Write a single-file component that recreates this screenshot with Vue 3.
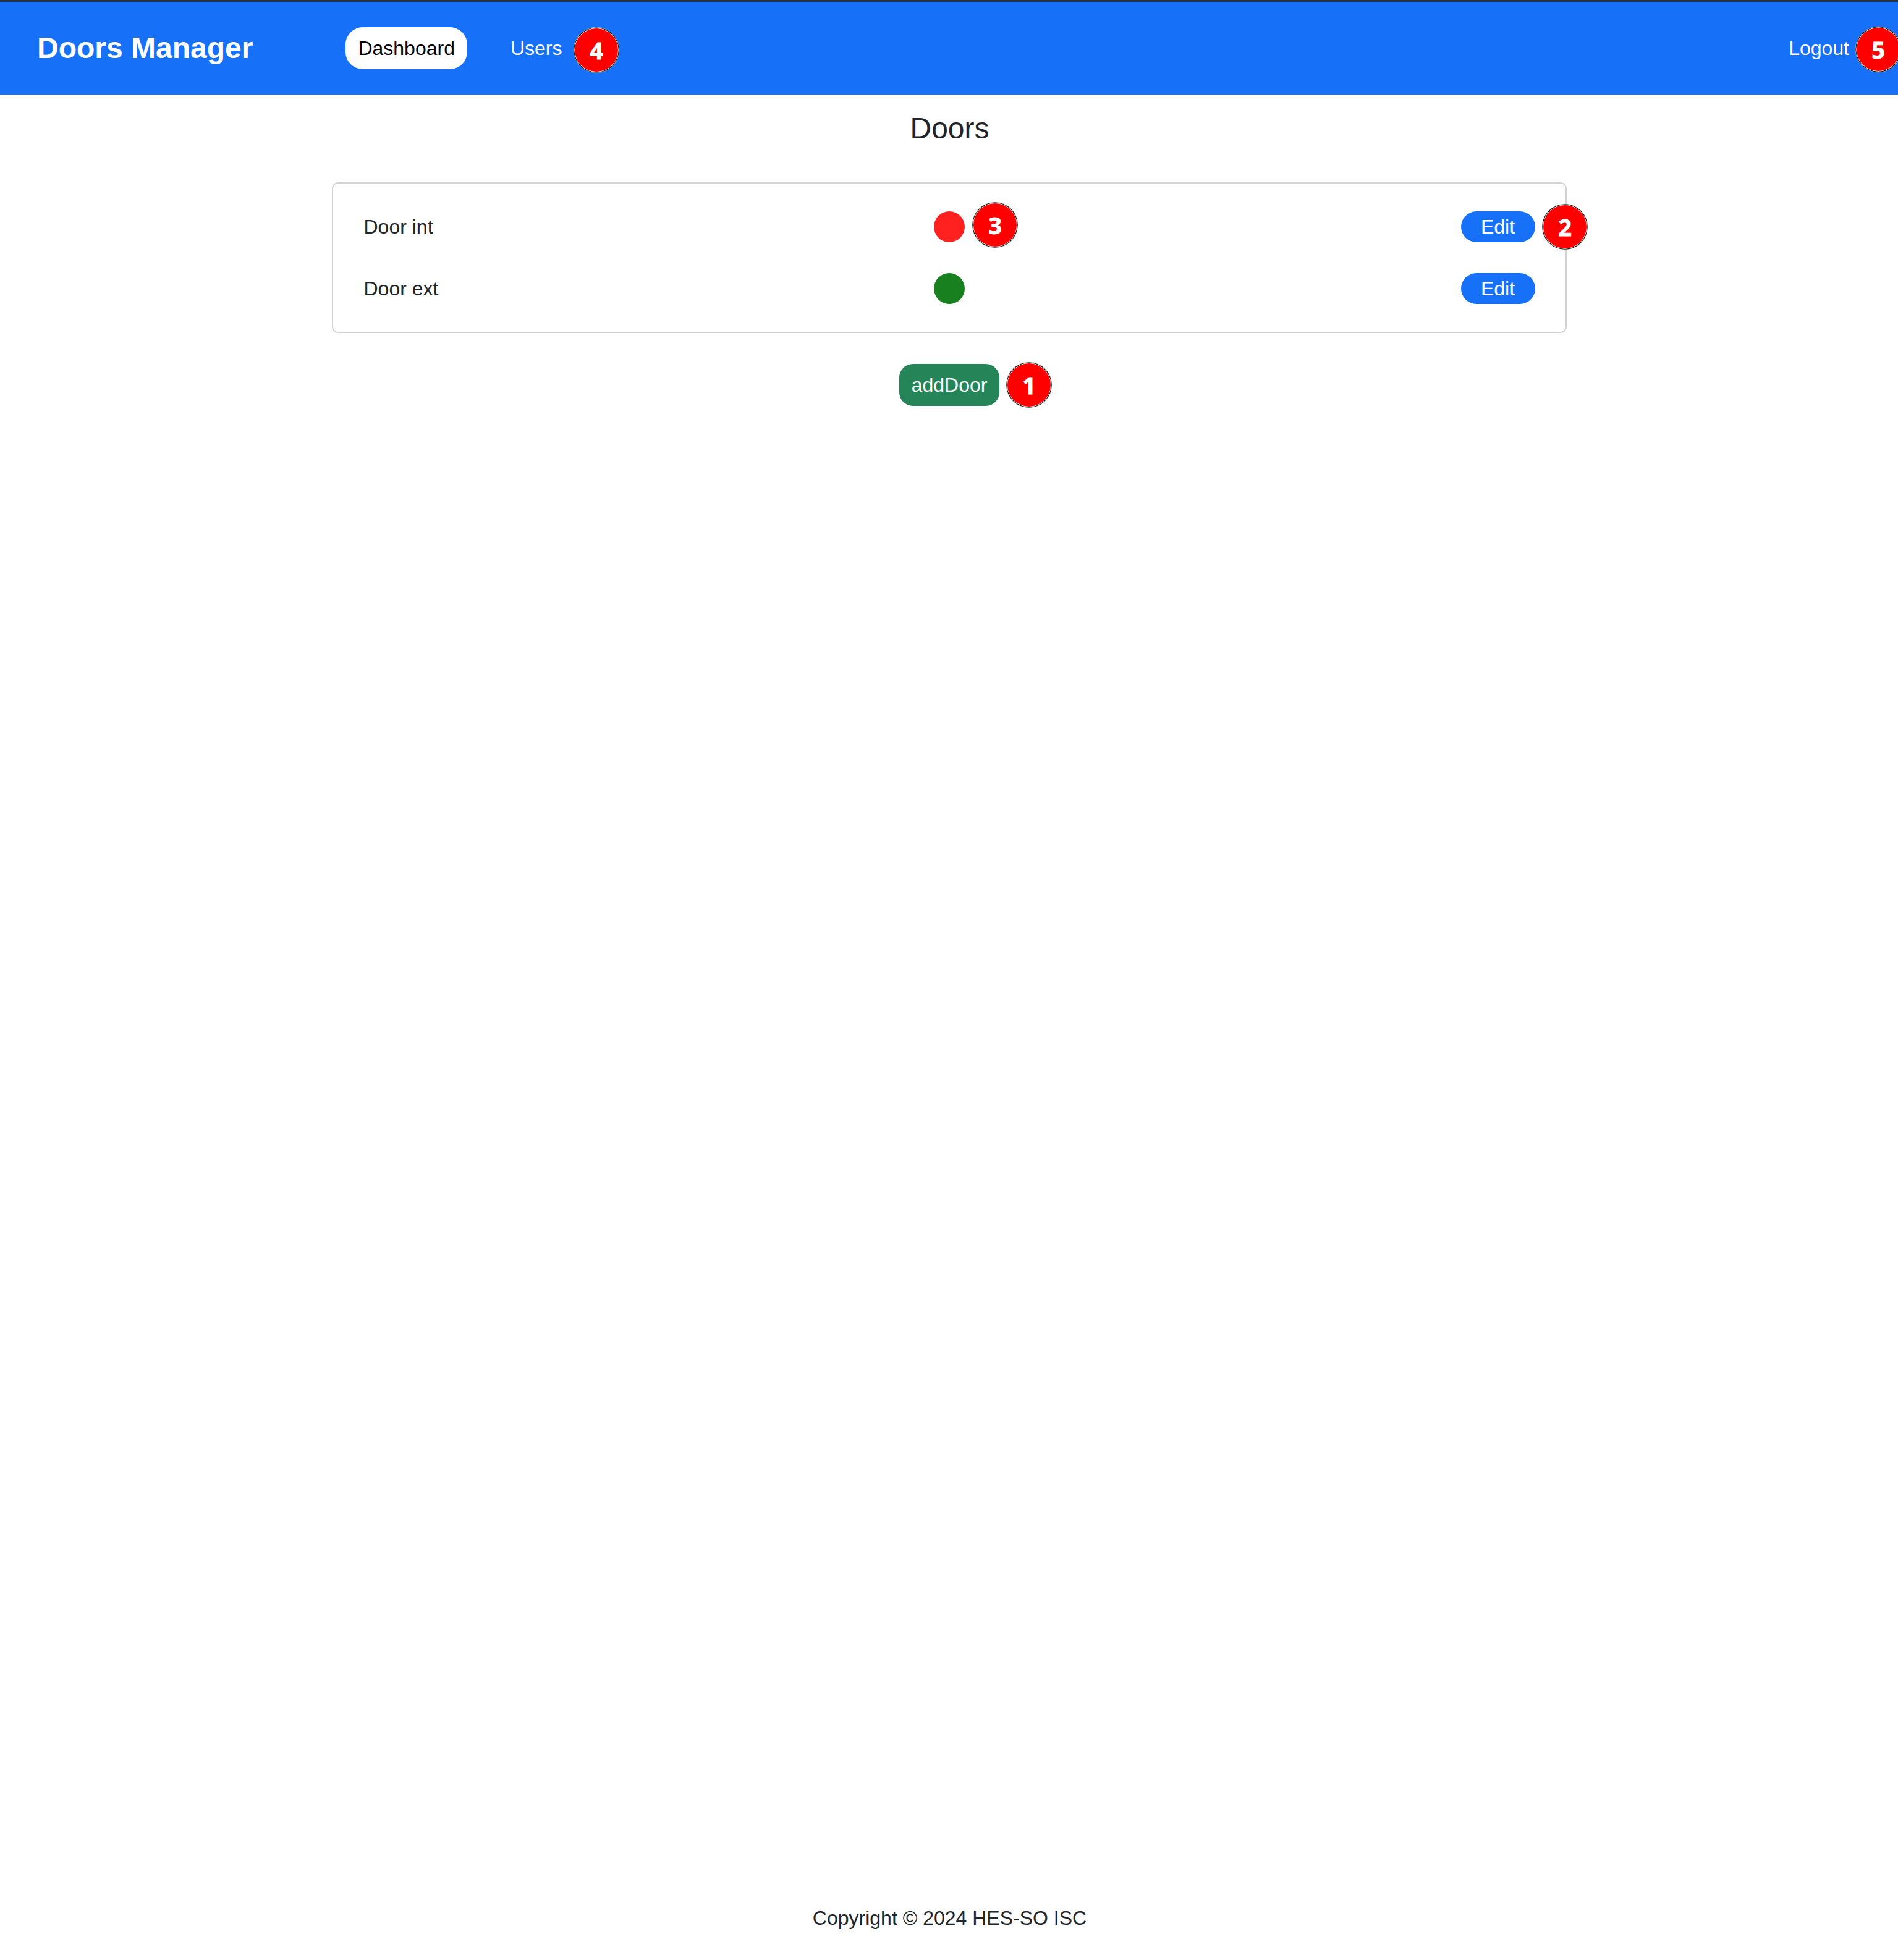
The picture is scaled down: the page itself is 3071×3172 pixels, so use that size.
<template>
  <div class="page">
    <header class="navbar">
      <span class="brand">Doors Manager</span>
      <nav class="nav-links">
        <a class="nav-link is-active">Dashboard</a>
        <a class="nav-link">Users</a>
      </nav>
      <a class="nav-link logout">Logout</a>
    </header>

    <main class="content">
      <h1 class="title">Doors</h1>

      <section class="door-list">
        <div v-for="door in doors" :key="door.id" class="door-row">
          <span class="door-name">{{ door.name }}</span>
          <span class="door-state" :class="door.open ? 'is-open' : 'is-closed'"></span>
          <button class="edit-btn">Edit</button>
        </div>
      </section>

      <button class="add-btn">addDoor</button>
    </main>

    <footer class="footer">Copyright © 2024 HES-SO ISC</footer>

    <!-- numbered markers sit on top of the page -->
    <span
      v-for="m in markers"
      :key="m.n"
      class="marker"
      :style="{ left: m.x + 'px', top: m.y + 'px' }"
    >{{ m.n }}</span>
  </div>
</template>

<script setup>
const doors = [
  { id: 1, name: 'Door int', open: false },
  { id: 2, name: 'Door ext', open: true }
]

const markers = [
  { n: 1, x: 1665, y: 623 },
  { n: 2, x: 2532, y: 367 },
  { n: 3, x: 1610, y: 364 },
  { n: 4, x: 965, y: 81 },
  { n: 5, x: 3039, y: 80 }
]
</script>

<style>
html, body { margin: 0; background: #fff; overflow: hidden; }
</style>

<style scoped>
.page {
  position: relative;
  display: flex;
  flex-direction: column;
  height: 3172px;
  overflow: hidden;
  font-family: "Liberation Sans", Arial, sans-serif;
  font-size: 32px;
  line-height: 48px;
  color: #212529;
  background: #fff;
}

.navbar {
  display: flex;
  align-items: center;
  height: 150px;
  padding: 0 0 0 60px;
  border-top: 3px solid #2b303b;
  background: #1670f8;
  color: #fff;
}
.brand { font-size: 48px; font-weight: bold; line-height: 72px; margin-right: 150px; }
.nav-links { display: flex; gap: 50px; }
.nav-link { display: block; padding: 10px 20px; border-radius: 28px; }
.nav-link.is-active { background: #fff; color: #000; }
.logout { margin-left: auto; margin-right: 59px; }

.content { flex: 1; display: flex; flex-direction: column; align-items: center; }
.title { margin: 20px 0 0; padding-left: 2px; height: 122px; font-size: 48px; font-weight: normal; line-height: 70px; color: #212529; }

.door-list {
  box-sizing: border-box;
  width: 1998px;
  padding: 20px 49px 20px 50px;
  border: 2px solid #d2d2d2;
  border-radius: 10px;
}
.door-row { display: grid; grid-template-columns: 1fr 50px 1fr; align-items: center; height: 100px; }
.door-name { color: #212529; }
.door-state { width: 50px; height: 50px; border-radius: 50%; }
.door-state.is-closed { background: #ff2020; }
.door-state.is-open { background: #198020; }

.edit-btn {
  justify-self: end;
  width: 120px;
  height: 50px;
  padding: 0;
  border: none;
  border-radius: 25px;
  background: #1670f8;
  color: #fff;
  font: inherit;
}

.add-btn {
  margin-top: 50px;
  margin-left: 1px;
  width: 162px;
  height: 68px;
  padding: 0;
  border: none;
  border-radius: 22px;
  background: #258559;
  color: #fff;
  font: inherit;
}

.footer { padding: 0 0 44px 2px; text-align: center; }

.marker {
  position: absolute;
  box-sizing: border-box;
  display: flex;
  align-items: center;
  justify-content: center;
  width: 70px;
  height: 70px;
  margin: -35px 0 0 -35px;
  border-radius: 50%;
  background: #f00;
  box-shadow: 0 0 0 0.7px #fff, 0 0 0 1.6px #000, 0 0 0 2.2px #bbb;
  color: #fff;
  font-family: "Open Sans", "Noto Sans", sans-serif;
  font-size: 38px;
  font-weight: 700;
  -webkit-text-stroke: 0.8px #fff;
  line-height: 1;
}
</style>
